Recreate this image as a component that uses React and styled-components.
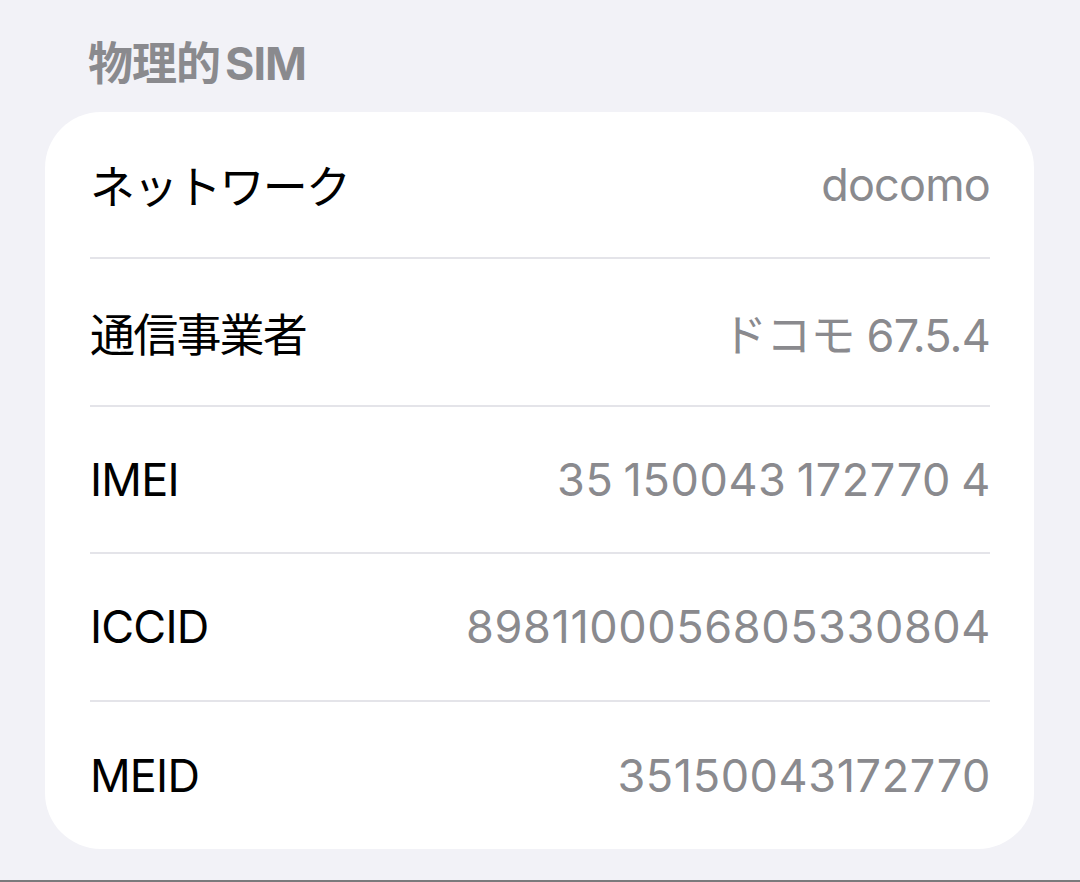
import React from 'react'
import styled, { createGlobalStyle } from 'styled-components'

const GlobalStyle = createGlobalStyle`
  html, body {
    margin: 0;
    padding: 0;
    background: #f2f2f7;
  }
  body {
    font-family: Inter, "Noto Sans CJK JP", sans-serif;
    -webkit-font-smoothing: antialiased;
  }
`

const Page = styled.div`
  width: 1080px;
  height: 882px;
  box-sizing: border-box;
  background: #f2f2f7;
  border-bottom: 2px solid #7a7a7c;
  padding: 39px 46px 0 45px;
  overflow: hidden;
`

const Header = styled.h2`
  margin: 0 0 23px 43px;
  font-size: 45px;
  line-height: 50px;
  font-weight: 700;
  letter-spacing: -1px;
  color: #8a8a8e;
`

const Latin = styled.span`
  margin-left: 5px;
`

const Card = styled.div`
  background: #fff;
  border-radius: 56px;
  padding: 0 44px 0 45px;
`

const Row = styled.div`
  height: 147.4px;
  box-sizing: border-box;
  display: flex;
  align-items: center;
  justify-content: space-between;
  border-bottom: ${p => (p.$last ? 'none' : '2px solid #e4e4e9')};
  font-size: 45px;
`

const Label = styled.span`
  color: #000;
  letter-spacing: ${p => (p.$cjk ? '-1.8px' : '-0.8px')};
`

const Value = styled.span`
  color: #8a8a8e;
  letter-spacing: ${p => (p.$numeric ? '0.6px' : '-0.8px')};
  word-spacing: ${p => (p.$numeric ? '-3px' : '0')};
  margin-right: ${p => (p.$numeric ? '-1px' : '0')};
`

const rows = [
  { label: 'ネットワーク', value: 'docomo', cjk: true },
  { label: '通信事業者', value: 'ドコモ 67.5.4', cjk: true },
  { label: 'IMEI', value: '35 150043 172770 4', numeric: true },
  { label: 'ICCID', value: '8981100056805330804', numeric: true },
  { label: 'MEID', value: '35150043172770', numeric: true },
]

const App = () => {
  return (
    <Page>
      <GlobalStyle />
      <Header>
        物理的<Latin>SIM</Latin>
      </Header>
      <Card>
        {rows.map((r, i) => (
          <Row key={r.label} $last={i === rows.length - 1}>
            <Label $cjk={r.cjk}>{r.label}</Label>
            <Value $numeric={r.numeric}>{r.value}</Value>
          </Row>
        ))}
      </Card>
    </Page>
  )
}

export default App
